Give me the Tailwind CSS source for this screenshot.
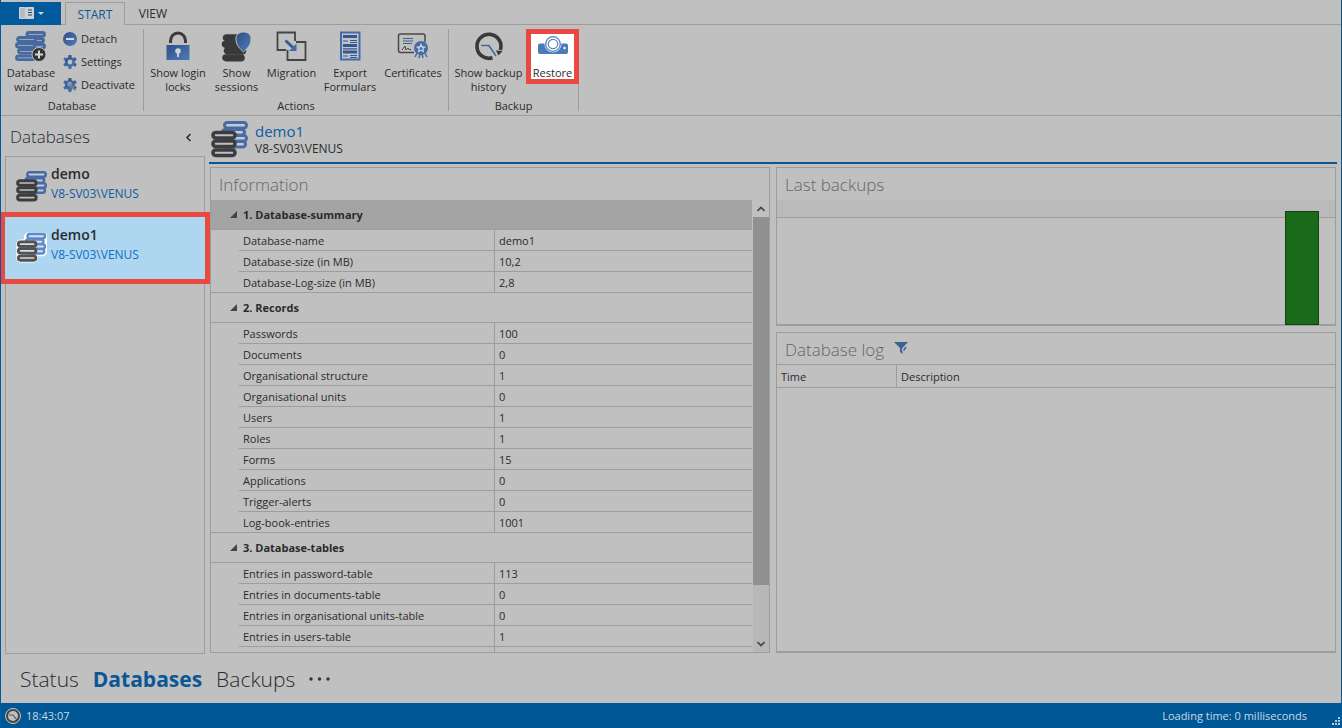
<!DOCTYPE html>
<html lang="en">
<head>
<meta charset="utf-8">
<title>Server manager - Databases</title>
<script src="https://cdn.jsdelivr.net/npm/@tailwindcss/browser@4"></script>
</head>
<body>
<svg width="0" height="0" class="absolute" aria-hidden="true">
  <defs>
    <linearGradient id="blue" x1="0" y1="0" x2="1" y2="1"><stop offset="0" stop-color="#304f87"/><stop offset="1" stop-color="#4f7bb8"/></linearGradient>
    <symbol id="db-pair" viewBox="0 0 37 37">
      <g fill="#c3cbd8" stroke="#486ba3" stroke-width="3">
        <rect x="13.5" y="1.5" width="22" height="5.5" rx="2.7"/><rect x="11.5" y="8.5" width="22" height="5.5" rx="2.7"/><rect x="13.5" y="14.5" width="22" height="5.5" rx="2.7"/><rect x="12.5" y="20.5" width="22" height="5.5" rx="2.7"/>
      </g>
      <g fill="#c0c0c0" stroke="#3d3d3f" stroke-width="3.6">
        <rect x="2" y="11.5" width="22" height="5.5" rx="2.7"/><rect x="2" y="20" width="22" height="5.5" rx="2.7"/><rect x="2" y="29" width="22" height="5.5" rx="2.7"/>
      </g>
    </symbol>
    <symbol id="gear" viewBox="0 0 14 14">
      <g fill="url(#blue)"><rect x="5.3" y="0" width="3.4" height="14" rx=".8"/><rect x="5.3" y="0" width="3.4" height="14" rx=".8" transform="rotate(60 7 7)"/><rect x="5.3" y="0" width="3.4" height="14" rx=".8" transform="rotate(120 7 7)"/><circle cx="7" cy="7" r="5"/></g>
    </symbol>
  </defs>
</svg>

<div class="flex h-screen flex-col overflow-hidden border-x border-[#005a9b] bg-[#c0c0c0] font-['Open_Sans','Noto_Sans',sans-serif] text-[11px] leading-[14px] text-[#2b2b2b]">

  <nav class="flex h-[25px] shrink-0 items-end pt-0.5">
    <button aria-label="Application menu" class="flex h-full w-[60px] items-center justify-center border-b border-[#005a9b] bg-[#005a9b]">
      <svg width="25" height="12" viewBox="0 0 25 12"><path d="M.5.5h6v11h-6z" fill="#b5bcc2" stroke="#cfd3d6"/><path d="M7.5.5h7v11h-7z" fill="#d0d0d0" stroke="#d0d0d0"/><path d="M9 3h4M9 5.500h4M9 8h4" stroke="#1d4a70"/><path d="M19 5h6l-3 3z" fill="#ccd5dc"/></svg>
    </button>
    <span class="h-full w-1 border-b border-[#9d9d9d]"></span>
    <button class="h-full w-[60px] border-x border-t border-[#9d9d9d] pt-0.5 text-xs text-[#0d5799]">START</button>
    <button class="h-full w-14 border-b border-[#9d9d9d] pt-0.5 text-xs">VIEW</button>
    <span class="h-full flex-1 border-b border-[#9d9d9d]"></span>
  </nav>

  <header class="flex h-[91px] shrink-0 border-b border-[#9d9d9d] py-1">
    <section class="flex w-[143px] flex-col justify-between border-r border-[#9d9d9d]">
      <div class="flex">
        <button class="flex w-[60px] flex-col items-center gap-[3px] pt-0.5 text-center">
          <svg width="32" height="32" viewBox="0 0 32 32"><g fill="#b4bece" stroke="#466a9f" stroke-width="2.800"><rect x="12" y="1.500" width="17.500" height="3.600" rx="1.800"/><rect x="11" y="7.500" width="17.500" height="3.600" rx="1.800"/><rect x="12" y="13.500" width="17.500" height="3.600" rx="1.800"/><rect x="2.500" y="6.500" width="18" height="3.600" rx="1.800"/><rect x="1.500" y="12.500" width="18" height="3.600" rx="1.800"/><rect x="3.500" y="18.500" width="18" height="3.600" rx="1.800"/><rect x="1.500" y="25" width="18" height="3.600" rx="1.800"/></g><circle cx="24" cy="23.500" r="7" fill="#343436" stroke="#c0c0c0"/><path d="M20 23.500h8M24 19.500v8" stroke="#d8d8d8" stroke-width="2"/></svg>
          <span>Database<br>wizard</span>
        </button>
        <div class="flex flex-col gap-[9px] pt-[3px] pl-0.5">
          <button class="flex items-center gap-1"><svg width="14" height="14" viewBox="0 0 14 14"><circle cx="7" cy="7" r="7" fill="url(#blue)"/><path d="M3 7h8" stroke="#d4d9e0" stroke-width="2"/></svg>Detach</button>
          <button class="flex items-center gap-1"><svg width="14" height="14" viewBox="0 0 14 14"><use href="#gear"/><circle cx="7" cy="7" r="2.400" fill="#c0c0c0"/></svg>Settings</button>
          <button class="flex items-center gap-1"><svg width="14" height="14" viewBox="0 0 14 14"><use href="#gear"/><circle cx="6.500" cy="6" r="2.400" fill="#8f9aab"/><path d="M6.500 6l5 5.500" stroke="#9a9ea4" stroke-width="2"/><path d="M7 6.500l5.500 6" stroke="#55585c"/></svg>Deactivate</button>
        </div>
      </div>
      <h2 class="-mb-0.5 text-center">Database</h2>
    </section>

    <section class="flex w-[305px] flex-col justify-between border-r border-[#9d9d9d]">
      <div class="flex pl-1">
        <button class="flex w-[60px] flex-col items-center gap-[3px] pt-0.5 text-center">
          <svg width="32" height="32" viewBox="0 0 32 32"><path d="M8.500 12v-2a7.500 8 0 0 1 15 0v2" fill="none" stroke="#3a3a3c" stroke-width="3"/><path d="M4.500 14h23v15h-23z" fill="url(#blue)"/><circle cx="16" cy="20" r="2.800" fill="#ccd2da"/><path d="M15 20h2v6h-2z" fill="#ccd2da"/></svg>
          <span>Show login<br>locks</span>
        </button>
        <button class="flex w-[57px] flex-col items-center gap-[3px] pt-0.5 text-center">
          <svg width="32" height="32" viewBox="0 0 32 32"><g fill="#bababa" stroke="#39393b" stroke-width="3.600"><rect x="3.500" y="5" width="19" height="3.600" rx="1.800"/><rect x="2.500" y="11.500" width="19" height="3.600" rx="1.800"/><rect x="4.500" y="18" width="19" height="3.600" rx="1.800"/><rect x="3" y="25" width="19" height="3.600" rx="1.800"/></g><path d="M22.500 1c5 0 8 3 7.500 8-.5 6-4.500 9-7.500 12-3-3-7-6-7.500-12-.5-5 2.500-8 7.500-8z" fill="url(#blue)" stroke="#c0c0c0"/></svg>
          <span>Show<br>sessions</span>
        </button>
        <button class="flex w-[53px] flex-col items-center gap-[3px] pt-0.5 text-center">
          <svg width="32" height="32" viewBox="0 0 32 32"><path d="M19 10V1.500H1.500V19H10" fill="none" stroke="#444446" stroke-width="1.800"/><path d="M11.500 20v9h18V11H20M11.500 20v-1" fill="none" stroke="#444446" stroke-width="1.800"/><path d="M9.500 9.500l8 7.500" stroke="#355b96" stroke-width="2.800"/><path d="M20.500 12.500V20H13z" fill="#456ca6"/></svg>
          <span>Migration</span>
        </button>
        <button class="flex w-16 flex-col items-center gap-[3px] pt-0.5 text-center">
          <svg width="32" height="32" viewBox="0 0 32 32"><path d="M7 1.500h18.500v27H7z" fill="#c0c5cd" stroke="#466ca5" stroke-width="2"/><path d="M9 5.500h14M9 14.500h14" stroke="#36568d" stroke-width="3"/><path d="M9 21h14" stroke="#36568d" stroke-width="3"/><path d="M9 10h5M16 9.500h7M16 11.500h7M9 17.800h14M9 25h5M16 24.500h7M16 26.500h7" stroke="#36568d" stroke-width="1.200"/></svg>
          <span>Export<br>Formulars</span>
        </button>
        <button class="flex w-[62px] flex-col items-center gap-[3px] pt-0.5 text-center">
          <svg width="32" height="32" viewBox="0 0 32 32"><path d="M17 21.500H3.500q-2 0-2-2V5q0-2 2-2H26q2 0 2 2v6" fill="none" stroke="#48484a" stroke-width="1.500"/><path d="M6 7.500h10M6 10h10M6 12.500h9" stroke="#42618f"/><path d="M5 19l3-4 1 4 2-2 1 1.500h2" fill="none" stroke="#444446"/><path d="M20 22l-2 4M23 23l-1 4M25 23l1 4M28 22l2 4" stroke="#45699f" stroke-width="1.400"/><circle cx="24" cy="17" r="7" fill="#456ba3"/><path d="M24 12l1.500 3.300 3.600.4-2.700 2.400.8 3.600-3.200-1.900-3.200 1.900.8-3.600-2.700-2.400 3.600-.4z" fill="#ced4dc"/><circle cx="24" cy="17.400" r="1.500" fill="#456ba3"/></svg>
          <span>Certificates</span>
        </button>
      </div>
      <h2 class="-mb-0.5 text-center">Actions</h2>
    </section>

    <section class="flex w-[130px] flex-col border-r border-[#9d9d9d]">
      <div class="-mr-px flex flex-1 items-start pl-0.5">
        <button class="flex w-[75px] flex-col items-center gap-[3px] pt-0.5 text-center">
          <svg width="32" height="32" viewBox="0 0 32 32"><path d="M19.500 26.800A12 12 0 1 1 27.400 19" fill="none" stroke="#39393b" stroke-width="3.600"/><path d="M23 19.500l6.500.5-4 4.500z" fill="#39393b"/><path d="M8 14.500h8" stroke="#54698b" stroke-width="1.500" fill="none"/><path d="M15.500 14l7.500 11" stroke="#3f669f" stroke-width="1.500"/></svg>
          <span>Show backup<br>history</span>
        </button>
        <button class="flex h-[55px] w-[53px] flex-col items-center justify-between border-5 border-[#e84a41] bg-white">
          <svg width="32" height="24" viewBox="0 0 32 24"><path d="M3 9.500h26q2 0 2 2V18q0 2-2 2H3q-2 0-2-2v-6.500q0-2 2-2z" fill="#4b7bbd"/><circle cx="16" cy="10" r="8.500" fill="#fff"/><circle cx="16" cy="10" r="7.300" fill="none" stroke="#5681bc" stroke-width="1.300"/><circle cx="16" cy="10" r="4.700" fill="none" stroke="#6189bf" stroke-width="1.300"/><circle cx="27.500" cy="14" r="1.200" fill="#fff"/></svg>
          <span class="-mb-px">Restore</span>
        </button>
      </div>
      <h2 class="-mb-0.5 text-center">Backup</h2>
    </section>
  </header>

  <div class="flex min-h-0 flex-1 gap-1 px-1">
    <aside class="flex w-[200px] shrink-0 flex-col">
      <div class="flex h-10 shrink-0 items-center justify-between px-[5px] pt-0.5">
        <h2 class="text-[17px] leading-6 font-light">Databases</h2>
        <button aria-label="Collapse" class="p-2"><svg width="7" height="9" viewBox="0 0 7 9"><path d="M5.500 1L2 4.500 5.500 8" fill="none" stroke="#2b2b2b" stroke-width="1.600"/></svg></button>
      </div>
      <ul class="flex-1 border border-[#9d9d9d]">
        <li><a href="#demo" class="flex h-[60px] gap-1 pt-2 pl-2.5">
          <svg class="mt-1.5" width="31" height="31"><use href="#db-pair"/></svg>
          <span><b class="block text-sm leading-[18px] font-semibold">demo</b><span class="mt-0.5 block text-xs leading-[18px] text-[#0d5ca4]">V8-SV03\VENUS</span></span>
        </a></li>
        <li><a href="#demo1" aria-current="true" class="relative z-10 -mx-px flex h-[62px] gap-1 bg-[#aed6f0] pt-[9px] pl-[11px] outline-5 outline-[#e84a41]">
          <svg class="mt-1.5" width="31" height="31" viewBox="-1 -1 39 39"><g fill="#fff" stroke="#fff" stroke-width="5"><rect x="11.500" y="2" width="24" height="25" rx="3"/><rect x="2" y="11" width="22" height="24" rx="3"/></g><g fill="#d5e4f4" stroke="#6089c7" stroke-width="3"><rect x="13.500" y="1.500" width="22" height="5.500" rx="2.700"/><rect x="11.500" y="8.500" width="22" height="5.500" rx="2.700"/><rect x="13.500" y="14.500" width="22" height="5.500" rx="2.700"/><rect x="12.500" y="20.500" width="22" height="5.500" rx="2.700"/></g><g fill="#dcdcdc" stroke="#525252" stroke-width="3.600"><rect x="2" y="11.500" width="22" height="5.500" rx="2.700"/><rect x="2" y="20" width="22" height="5.500" rx="2.700"/><rect x="2" y="29" width="22" height="5.500" rx="2.700"/></g></svg>
          <span><b class="block text-sm leading-[18px] font-semibold">demo1</b><span class="mt-0.5 block text-xs leading-[18px] text-[#0f70c4]">V8-SV03\VENUS</span></span>
        </a></li>
      </ul>
    </aside>

    <main class="flex min-w-0 flex-1 flex-col">
      <div class="flex h-12 shrink-0 gap-[7px] border-b-2 border-[#0b5795] pt-[5px] pl-0.5">
        <svg width="37" height="37"><use href="#db-pair"/></svg>
        <div><h1 class="text-[15px] leading-5 text-[#0d5ca4]">demo1</h1><p class="text-xs leading-4">V8-SV03\VENUS</p></div>
      </div>

      <div class="grid min-h-0 flex-1 grid-cols-2 gap-1.5 pt-[3px] pr-px pb-px pl-px">
        <section class="flex min-h-0 flex-col border border-[#9d9d9d]">
          <h2 class="h-8 shrink-0 pl-2 text-[17px] leading-[33px] font-light text-[#666]">Information</h2>
          <div class="flex min-h-0 flex-1">
            <div class="min-w-0 flex-1 overflow-hidden">
              <table class="w-full table-fixed border-separate border-spacing-0 text-left [&_th]:p-0 [&_th]:font-normal [&_td]:p-0 [&_td+th]:h-[21px] [&_td+th]:border-b [&_td+th]:border-[#9d9d9d] [&_td+th]:pt-0.5 [&_td+th]:pl-1 [&_th+td]:border-b [&_th+td]:border-l [&_th+td]:border-[#9d9d9d] [&_th+td]:pt-0.5 [&_th+td]:pl-1">
                <colgroup><col class="w-7"><col class="w-[255px]"><col></colgroup>
                <tbody>
                  <tr><th colspan="3" class="h-[30px] border-b border-[#9d9d9d] bg-[#a4a4a4]"><button class="flex items-center gap-1.5 pl-[19px] font-bold"><svg width="7" height="7"><path d="M7 0v7H0z" fill="#444"/></svg>1. Database-summary</button></th></tr>
                  <tr><td></td><th>Database-name</th><td>demo1</td></tr>
                  <tr><td></td><th>Database-size (in MB)</th><td>10,2</td></tr>
                  <tr><td class="border-b border-[#9d9d9d]"></td><th>Database-Log-size (in MB)</th><td>2,8</td></tr>
                </tbody>
                <tbody>
                  <tr><th colspan="3" class="h-[30px] border-b border-[#9d9d9d]"><button class="flex items-center gap-1.5 pl-[19px] font-bold"><svg width="7" height="7"><path d="M7 0v7H0z" fill="#444"/></svg>2. Records</button></th></tr>
                  <tr><td></td><th>Passwords</th><td>100</td></tr>
                  <tr><td></td><th>Documents</th><td>0</td></tr>
                  <tr><td></td><th>Organisational structure</th><td>1</td></tr>
                  <tr><td></td><th>Organisational units</th><td>0</td></tr>
                  <tr><td></td><th>Users</th><td>1</td></tr>
                  <tr><td></td><th>Roles</th><td>1</td></tr>
                  <tr><td></td><th>Forms</th><td>15</td></tr>
                  <tr><td></td><th>Applications</th><td>0</td></tr>
                  <tr><td></td><th>Trigger-alerts</th><td>0</td></tr>
                  <tr><td class="border-b border-[#9d9d9d]"></td><th>Log-book-entries</th><td>1001</td></tr>
                </tbody>
                <tbody>
                  <tr><th colspan="3" class="h-[30px] border-b border-[#9d9d9d]"><button class="flex items-center gap-1.5 pl-[19px] font-bold"><svg width="7" height="7"><path d="M7 0v7H0z" fill="#444"/></svg>3. Database-tables</button></th></tr>
                  <tr><td></td><th>Entries in password-table</th><td>113</td></tr>
                  <tr><td></td><th>Entries in documents-table</th><td>0</td></tr>
                  <tr><td></td><th>Entries in organisational units-table</th><td>0</td></tr>
                  <tr><td></td><th>Entries in users-table</th><td>1</td></tr>
                  <tr><td></td><th></th><td></td></tr>
                </tbody>
              </table>
            </div>
            <div class="ml-px flex w-4 shrink-0 flex-col bg-[#b7b7b7]">
              <button aria-label="Scroll up" class="flex h-[17px] items-center justify-center bg-[#c0c0c0]"><svg width="8" height="6"><path d="M.5 5L4 1.500 7.500 5" fill="none" stroke="#444" stroke-width="1.600"/></svg></button>
              <div class="min-h-0 flex-1"><div class="h-[88%] bg-[#909090]"></div></div>
              <button aria-label="Scroll down" class="flex h-[17px] items-center justify-center"><svg width="8" height="6"><path d="M.5 1L4 4.500 7.500 1" fill="none" stroke="#444" stroke-width="1.600"/></svg></button>
            </div>
          </div>
        </section>

        <div class="flex min-h-0 flex-col gap-1.5">
          <section class="relative h-[159px] shrink-0 border border-b-2 border-[#9d9d9d]">
            <h2 class="h-8 pl-2 text-[17px] leading-[33px] font-light text-[#666]">Last backups</h2>
            <div class="h-[18px] border-b border-[#9d9d9d] bg-[#bababa]"></div>
            <div class="absolute right-4 -bottom-px h-[114px] w-[34px] border border-[#10410f] bg-[#196a19]"></div>
          </section>
          <section class="min-h-0 flex-1 border border-b-2 border-[#9d9d9d]">
            <div class="flex h-[31px] items-center gap-2.5 pl-2">
              <h2 class="pt-[3px] text-[17px] leading-6 font-light text-[#666]">Database log</h2>
              <button aria-label="Filter"><svg width="14" height="13" viewBox="0 0 14 13"><path d="M0 0h14L8.500 6v6L6 10V6z" fill="#3a6094"/><path d="M12 4.500L8.500 9" stroke="#c0c0c0" stroke-width="3"/><path d="M12 5L9.500 8.500" stroke="#3a6094" stroke-width="1.500"/></svg></button>
            </div>
            <table class="w-full table-fixed border-separate border-spacing-0 text-left">
              <thead><tr><th class="h-6 w-[120px] border-y border-r border-[#9d9d9d] pt-0.5 pr-0 pb-0 pl-1 font-normal">Time</th><th class="border-y border-[#9d9d9d] pt-0.5 pr-0 pb-0 pl-1 font-normal">Description</th></tr></thead>
            </table>
          </section>
        </div>
      </div>
    </main>
  </div>

  <nav class="flex h-[49px] shrink-0 items-center gap-3.5 pl-[19px] text-[21px] leading-8">
    <a href="#status" class="font-light">Status</a>
    <a href="#databases" class="font-bold text-[#0b5795]">Databases</a>
    <a href="#backups" class="font-light">Backups</a>
    <button aria-label="More"><svg width="21" height="4"><circle cx="2" cy="2" r="1.700" fill="#333"/><circle cx="10.500" cy="2" r="1.700" fill="#333"/><circle cx="19" cy="2" r="1.700" fill="#333"/></svg></button>
  </nav>

  <footer class="relative flex h-[25px] shrink-0 items-center gap-[5px] bg-[#005795] pr-[34px] pl-1 text-[#c9d8e4]">
    <svg width="16" height="16" viewBox="0 0 16 16"><circle cx="8" cy="8" r="7.500" fill="#444" stroke="#c5c5c5"/><circle cx="8" cy="8" r="5" fill="#c0c0c0"/><path d="M4 7h4l4 5" fill="none" stroke="#555" stroke-width="1.200"/></svg>
    <time>18:43:07</time>
    <span class="ml-auto">Loading time: 0 milliseconds</span>
    <svg class="absolute right-0 bottom-0.5" width="9" height="9" viewBox="0 0 9 9" fill="#c0c8ce"><path d="M6 0h2v2H6zM3 3h2v2H3zM6 3h2v2H6zM0 6h2v2H0zM3 6h2v2H3zM6 6h2v2H6z"/></svg>
  </footer>
</div>
</body>
</html>
